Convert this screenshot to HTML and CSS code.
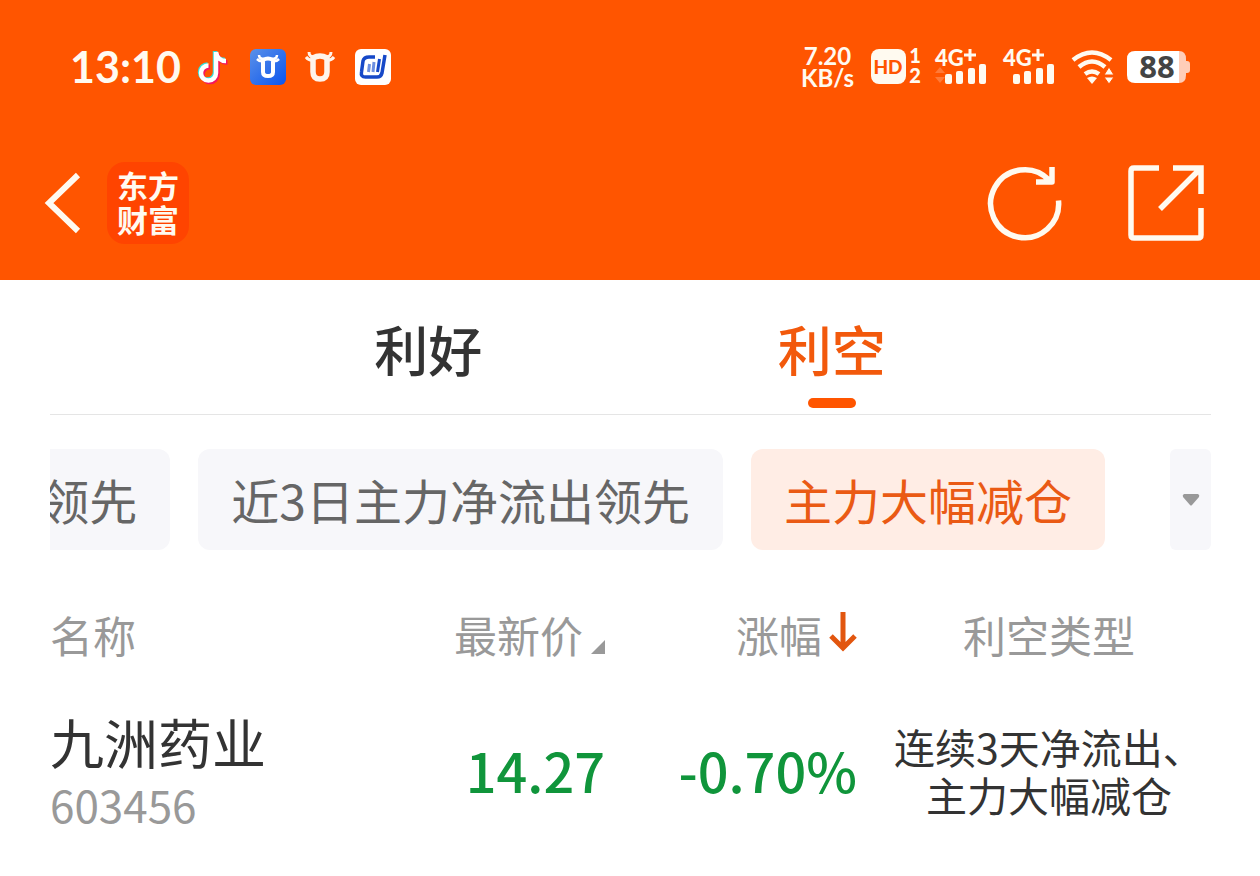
FILE: index.html
```html
<!DOCTYPE html>
<html lang="zh-CN">
<head>
<meta charset="utf-8">
<meta name="viewport" content="width=device-width, initial-scale=1">
<title>利空</title>
<link rel="stylesheet" href="styles.css">
</head>
<body>
<header class="top">
  <div class="status">
    <div class="status-left">
      <span class="clock">13:10</span>
      <svg class="app-note" width="30" height="34" viewBox="0 0 30 34" fill="none" stroke-width="4.500">
        <path d="M16 2v21a7.500 7.500 0 1 1-7.500-7.500M16 3c1 5 5 8 10 8" stroke="#35e0dc" transform="translate(-1 -1)"/>
        <path d="M16 2v21a7.500 7.500 0 1 1-7.500-7.500M16 3c1 5 5 8 10 8" stroke="#f5175c" transform="translate(1.500 1.500)"/>
        <path d="M16 2v21a7.500 7.500 0 1 1-7.500-7.500M16 2c1 6 5 9 10 9" stroke="#fff"/>
      </svg>
      <svg class="app-blue" width="36" height="36" viewBox="0 0 36 36">
        <defs><linearGradient id="blue" x1="0" y1="0" x2="1" y2="1"><stop offset="0" stop-color="#5b91e8"/><stop offset="1" stop-color="#0b55ee"/></linearGradient></defs>
        <rect width="36" height="36" rx="6" fill="url(#blue)"/>
        <path d="M9 6c0 3 2 4 5 4M27 6c0 3-2 4-5 4M7 10q3 3 6 2M29 10q-3 3-6 2" fill="none" stroke="#fff" stroke-width="2.500"/>
        <path d="M13 11q5-3 10 0v12q0 4-5 4t-5-4z" fill="none" stroke="#fff" stroke-width="4"/>
      </svg>
      <svg class="app-bull" width="30" height="32" viewBox="0 0 30 32" fill="none" stroke="#fff4ea">
        <path d="M4 1c0 4 2 5 6 5M26 1c0 4-2 5-6 5M1 6q3 4 8 3M29 6q-3 4-8 3" stroke-width="3"/>
        <path d="M8 7q7-4 14 0v14q0 7-7 7t-7-7z" stroke-width="5.500"/>
      </svg>
      <svg width="36" height="36" viewBox="0 0 36 36" fill="none" stroke="#1648c8">
        <rect width="36" height="36" rx="6" fill="#fff" stroke="none"/>
        <path d="M20 8h-6q-5 0-6 4L6.500 23q-1 5 4 5H22q4 0 5-4l3-18" stroke-width="3.500"/>
        <path d="M14.500 15l-1 8M19 13l-1 10" stroke="#6d8fe0" stroke-width="3"/>
        <path d="M24.500 10l-2 13" stroke-width="3"/>
      </svg>
    </div>
    <div class="status-right">
      <span class="speed">7.20<br>KB/s</span>
      <svg class="hd" width="50" height="36" viewBox="0 0 50 36">
        <rect width="35" height="35" rx="8" fill="#fffaf0"/>
        <text x="17" y="25" class="hd-text">HD</text>
        <text x="44" y="14" class="sim-text">1</text>
        <text x="44" y="34" class="sim-text">2</text>
      </svg>
      <svg class="signal" width="52" height="40" viewBox="0 0 52 40">
        <text x="0" y="19" class="net-text">4G</text>
        <path d="M35 2v12M29 8h12" stroke="#fffaf0" stroke-width="3"/>
        <path d="M0 26l5-6 5 6zM0 30l5 6 5-6z" fill="#ff7a38"/>
        <g fill="#fffaf0"><rect x="10" y="27" width="7" height="10" rx="2"/><rect x="21" y="24" width="7" height="13" rx="2"/><rect x="33" y="21" width="7" height="16" rx="2"/><rect x="44" y="17" width="7" height="20" rx="2"/></g>
      </svg>
      <svg class="signal" width="52" height="40" viewBox="0 0 52 40">
        <text x="0" y="19" class="net-text">4G</text>
        <path d="M35 2v12M29 8h12" stroke="#fffaf0" stroke-width="3"/>
        <g fill="#fffaf0"><rect x="10" y="27" width="7" height="10" rx="2"/><rect x="21" y="24" width="7" height="13" rx="2"/><rect x="33" y="21" width="7" height="16" rx="2"/><rect x="44" y="17" width="7" height="20" rx="2"/></g>
      </svg>
      <svg class="wifi" width="44" height="34" viewBox="0 0 44 34" fill="none" stroke="#fffaf0" stroke-width="4.500">
        <path d="M2 10q19-15 38 0M8 17q13-11 26 0M14 24q7-5 14 0"/>
        <path d="M16 28q5-3 10 0l-5 6z" fill="#fffaf0" stroke="none"/>
        <path d="M33 25l5-8 5 8zM33 27l5 7 5-7z" fill="#fffaf0" stroke="#ff5500" stroke-width="1"/>
      </svg>
      <svg class="battery" width="63" height="32" viewBox="0 0 63 32">
        <path d="M50 0h2q7 0 7 8v2h1q3 0 3 3v6q0 3-3 3h-1v2q0 8-7 8h-2z" fill="#ffcdb8"/>
        <path d="M8 0h44v32H8q-8 0-8-8V8q0-8 8-8z" fill="#fff"/>
        <text x="30" y="27" class="battery-text">88</text>
      </svg>
    </div>
  </div>
  <nav class="nav">
    <button class="icon-button" type="button" aria-label="返回">
      <svg width="36" height="60" viewBox="0 0 36 60" fill="none" stroke="#fffaf0" stroke-width="6"><path d="M34 2L5 30l29 28"/></svg>
    </button>
    <a class="brand" href="#">东方<br>财富</a>
    <button class="icon-button refresh" type="button" aria-label="刷新">
      <svg width="74" height="74" viewBox="0 0 74 74" fill="none" stroke="#fffaf0" stroke-width="5.500" stroke-linejoin="round"><path d="M70.500 34.500A34 34 0 1 1 61 14M64 1v15H48"/></svg>
    </button>
    <button class="icon-button" type="button" aria-label="分享">
      <svg width="76" height="76" viewBox="0 0 76 76" fill="none" stroke="#fffaf0" stroke-width="5.500"><path d="M31 3H6Q3 3 3 6v64q0 3 3 3h64q3 0 3-3V43M45 3h28v26M72 4L32 44"/></svg>
    </button>
  </nav>
</header>
<main class="content">
  <div class="tabs" role="tablist">
    <button class="tab" type="button" role="tab" aria-selected="false">利好</button>
    <button class="tab active" type="button" role="tab" aria-selected="true">利空</button>
  </div>
  <div class="filters">
    <div class="chips">
      <button class="chip" type="button">领先</button>
      <button class="chip" type="button">近3日主力净流出领先</button>
      <button class="chip selected" type="button">主力大幅减仓</button>
    </div>
    <button class="more" type="button" aria-label="更多">
      <svg width="18" height="12" viewBox="0 0 18 12"><path d="M2 0h14q2 1 1 3l-7 8q-1 1-2 0L1 3Q0 1 2 0z" fill="#999"/></svg>
    </button>
  </div>
  <table class="stocks">
    <thead>
      <tr>
        <th class="col-name" scope="col">名称</th>
        <th class="col-price" scope="col"><button class="sort" type="button">最新价<svg class="corner" width="14" height="14" viewBox="0 0 14 14"><path d="M14 0v14H0z" fill="#999"/></svg></button></th>
        <th class="col-change" scope="col"><button class="sort" type="button">涨幅<svg class="arrow" width="28" height="42" viewBox="0 0 28 42" fill="none" stroke="#e2560f" stroke-width="5"><path d="M14 1v36M2 25l12 12 12-12"/></svg></button></th>
        <th class="col-type" scope="col">利空类型</th>
      </tr>
    </thead>
    <tbody>
      <tr>
        <td><div class="stock-name">九洲药业</div><div class="stock-code">603456</div></td>
        <td class="figure">14.27</td>
        <td class="figure">-0.70%</td>
        <td class="reason">连续3天净流出、<br>主力大幅减仓</td>
      </tr>
    </tbody>
  </table>
</main>
</body>
</html>
```
FILE: styles.css
```css
* { box-sizing: border-box; }
body {
  margin: 0;
  background: #fff;
  color: #333;
  font-family: "Noto Sans CJK SC", sans-serif;
}
button {
  margin: 0;
  padding: 0;
  border: 0;
  background: none;
  color: inherit;
  font: inherit;
  white-space: nowrap;
}
svg { display: block; flex: none; overflow: visible; }

.top { background: #ff5500; color: #fffaf0; }
.status {
  display: flex;
  justify-content: space-between;
  align-items: center;
  height: 134px;
  padding: 0 70px;
}
.status-left, .status-right { display: flex; align-items: center; }
.clock {
  font: 700 43px/50px Lato, sans-serif;
  margin-right: 19px;
}
.app-note { margin-right: 20px; }
.app-blue { margin-right: 19px; }
.app-bull { margin-right: 20px; }
.speed {
  font: 700 24px/22px Lato, sans-serif;
  text-align: center;
  margin-right: 17px;
}
.hd { margin-right: 14px; }
.signal { margin-right: 16px; }
.wifi { margin-right: 12px; }
.hd-text { font: 900 19px Lato, sans-serif; fill: #ff5500; text-anchor: middle; }
.sim-text { font: 900 20px Lato, sans-serif; fill: #fffaf0; text-anchor: middle; }
.net-text { font: 900 22px Lato, sans-serif; fill: #fffaf0; }
.battery-text { font: 700 31px "Noto Sans", sans-serif; fill: #444; text-anchor: middle; }

.nav {
  display: flex;
  align-items: center;
  height: 146px;
  padding: 0 56px 8px 44px;
}
.brand {
  display: flex;
  justify-content: center;
  align-items: center;
  width: 82px;
  height: 82px;
  margin-left: 27px;
  padding-bottom: 2px;
  border-radius: 18px;
  background: #ff4400;
  color: #fffaf0;
  font-size: 31px;
  font-weight: 700;
  line-height: 34px;
  text-decoration: none;
}
.refresh { margin-left: auto; margin-right: 66px; }

.content { padding: 0 49px 0 50px; }
.tabs {
  display: flex;
  height: 135px;
  padding: 0 15.3% 0 15.2%;
  border-bottom: 1px solid #e5e5e5;
}
.tab {
  display: flex;
  flex: 1;
  flex-direction: column;
  align-items: center;
  gap: 14px;
  padding-top: 34px;
  font-size: 54px;
  font-weight: 500;
  line-height: 70px;
}
.tab.active { color: #f2590c; }
.tab.active::after {
  content: "";
  width: 48px;
  height: 10px;
  border-radius: 5px;
  background: #ff5500;
}

.filters { display: flex; margin-top: 34px; }
.chips {
  display: flex;
  flex: 1;
  justify-content: flex-end;
  gap: 28px;
  min-width: 0;
  padding-right: 65px;
  overflow: hidden;
}
.chip {
  flex: none;
  height: 101px;
  padding: 0 33px 2px;
  border-radius: 12px;
  background: #f7f7fa;
  color: #666;
  font-size: 48px;
}
.chip.selected { background: #ffede5; color: #ea5a14; }
.more {
  display: flex;
  justify-content: center;
  align-items: center;
  width: 41px;
  border-radius: 6px;
  background: #f7f7fa;
}

.stocks {
  width: 100%;
  margin-top: 54px;
  border-collapse: collapse;
  table-layout: fixed;
}
th, td { padding: 0; }
th {
  height: 60px;
  color: #999;
  font-size: 43px;
  font-weight: 400;
  line-height: 60px;
}
td { padding-top: 48px; }
.col-name { width: 30%; text-align: left; }
.col-price { width: 17.8%; }
.col-change { width: 21.7%; }
.col-type { width: 30.5%; padding-left: 30px; }
.sort {
  display: flex;
  align-items: center;
  margin-left: auto;
}
.corner { align-self: flex-end; margin: 0 0 10px 8px; }
.arrow { margin: 0 0 4px 7px; }
.stock-name { font-size: 54px; line-height: 60px; }
.stock-code { margin-top: 8px; color: #999; font-size: 44px; line-height: 48px; }
.figure {
  color: #10953b;
  font-size: 54px;
  font-weight: 500;
  line-height: 60px;
  text-align: right;
}
.reason {
  padding-left: 30px;
  font-size: 41px;
  line-height: 48px;
  text-align: center;
  white-space: nowrap;
}
```
